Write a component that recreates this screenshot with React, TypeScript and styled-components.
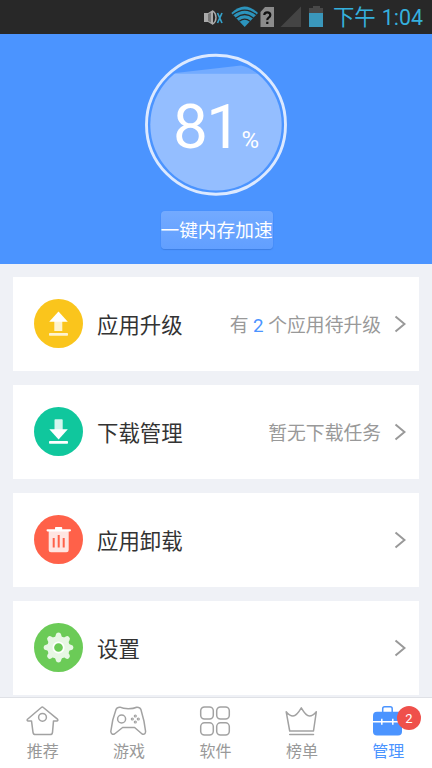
import React from "react";
import styled, { createGlobalStyle } from "styled-components";

const Global = createGlobalStyle`
  * { box-sizing: border-box; }
  html, body { margin: 0; padding: 0; overflow: hidden; }
  body { font-family: Roboto, "Noto Sans CJK SC", sans-serif; }
`;

const Screen = styled.div`
  width: 432px;
  height: 768px;
  display: flex;
  flex-direction: column;
  overflow: hidden;
  background: #eff1f6;
`;

const StatusBar = styled.header`
  flex: none;
  height: 34px;
  display: flex;
  justify-content: flex-end;
  align-items: center;
  padding-right: 9px;
  background: #282828;
  color: #35b0dd;
`;

const Clock = styled.div`
  display: flex;
  gap: 6px;
  margin-left: 8px;
  padding-top: 2px;
  font-size: 21.4px;
  line-height: 32px;
  white-space: nowrap;
`;

const Hero = styled.section`
  flex: none;
  height: 230px;
  display: flex;
  flex-direction: column;
  align-items: center;
  padding-top: 19px;
  background: #4b94ff;
`;

const Gauge = styled.div`
  display: grid;
  width: 144px;
  height: 144px;
  > * { grid-area: 1 / 1; }
`;

const Reading = styled.div`
  z-index: 1;
  display: flex;
  align-items: baseline;
  padding: 36px 0 0 29px;
  color: #fff;
  line-height: 75px;
`;

const Value = styled.span`
  font-size: 62px;
  letter-spacing: -1.6px;
`;

const Percent = styled.span`
  margin-left: 2px;
  font-size: 24px;
`;

const BoostButton = styled.button`
  width: 112px;
  height: 38px;
  margin: 14px 0 0 1px;
  padding: 2px 0 0;
  border: 0;
  border-radius: 4px;
  background: linear-gradient(#73aaff, #619fff);
  box-shadow: 0 1px 1px #3d7fe4, 0 0 1px #3d7fe4;
  color: #fff;
  font: 18.7px/36px Roboto, "Noto Sans CJK SC", sans-serif;
  white-space: nowrap;
`;

const List = styled.main`
  flex: 1;
  min-height: 0;
  overflow: hidden;
  display: flex;
  flex-direction: column;
  gap: 14px;
  padding: 13px 13px 0;
`;

const Card = styled.div`
  flex: none;
  height: 94px;
  display: flex;
  align-items: center;
  padding: 0 13px 1px 21px;
  background: #fff;
`;

const Disc = styled.svg`
  display: block;
  width: 49px;
  height: 49px;
`;

const Label = styled.div`
  flex: 1;
  margin-left: 14px;
  padding-top: 4px;
  font-size: 21.4px;
  line-height: 32px;
  color: #333;
`;

const Note = styled.div`
  margin-right: 13px;
  padding-top: 5px;
  font-size: 18.8px;
  line-height: 28px;
  color: #999;
  white-space: pre;
  b { font-weight: 400; color: #4b94ff; }
`;

const TabBar = styled.nav`
  flex: none;
  height: 71px;
  display: grid;
  grid-template-columns: repeat(5, 1fr);
  border-top: 1px solid #dfe1e6;
  background: #fff;
`;

const Tab = styled.div<{ $active?: boolean }>`
  position: relative;
  display: flex;
  flex-direction: column;
  align-items: center;
  padding: 7px 1px 0 0;
  color: ${(p) => (p.$active ? "#4b94ff" : "#999")};
`;

const TabIcon = styled.svg`
  display: block;
  width: 40px;
  height: 32px;
  fill: none;
  stroke: #a2a2a2;
  stroke-width: 1.5;
  stroke-linejoin: round;
  stroke-linecap: round;
`;

const TabText = styled.span`
  margin-top: 3px;
  font-size: 16px;
  line-height: 24px;
`;

const Badge = styled.span`
  position: absolute;
  top: 8px;
  right: 11px;
  width: 24px;
  height: 24px;
  border-radius: 50%;
  background: #ef504b;
  color: #fff;
  font-size: 13px;
  line-height: 25px;
  text-align: center;
`;

const StatusIcons = () => (
  <svg width="124" height="34" viewBox="201 0 124 34">
    <path d="M204 13h4l5-3v15l-5-3h-4z" fill="#aaa" />
    <path d="M208 14l3-1.500v10l-3-1.500z" fill="#777" />
    <path d="M213 11q3 2.500 3 6.500t-3 6.500" fill="none" stroke="#aaa" strokeWidth="1.400" />
    <path d="M217.500 13l4.500 10M222 13l-4.500 10" stroke="#35a0c8" strokeWidth="1.700" />
    <path d="M231.300 13Q244.500 0 258 13L244.700 27Z" fill="#2c94bd" />
    <g fill="none" stroke="#282828" strokeWidth="1.300">
      <path d="M233 14.800q11.700-9.500 23.400 0" />
      <path d="M236 18q8.700-7 17.400 0" />
      <path d="M239.300 21.300q5.400-4.500 10.800 0" />
    </g>
    <path d="M265 7h9v20h-13.500V12z" fill="#8b8b8b" />
    <path d="M264.300 15q0-2.700 3-2.700t3 2.700q0 1.500-1.600 2.700t-1.400 2.500M267.300 21.800v2.300" fill="none" stroke="#111" strokeWidth="2.200" />
    <path d="M301 6.500V27h-20.500z" fill="#444" />
    <path d="M313 6h7v2h3v5h-14V8h4z" fill="#484848" />
    <path d="M309 13h14v14h-14z" fill="#3a97bb" />
  </svg>
);

const GaugeArt = () => (
  <svg width="144" height="144" viewBox="0 0 144 144">
    <defs>
      <clipPath id="tank"><circle cx="72" cy="71.700" r="65.700" /></clipPath>
    </defs>
    <g clipPath="url(#tank)">
      <path d="M27 20.500L97 12.500Q105 14 114 20.500z" fill="#73abff" />
      <path d="M0 20.500h144V144H0z" fill="#94beff" />
    </g>
    <circle cx="72" cy="71.700" r="69.500" fill="none" stroke="#dce9ff" strokeWidth="2.900" />
  </svg>
);

const UpgradeIcon = () => (
  <Disc viewBox="0 0 49 49">
    <circle cx="24.500" cy="24.500" r="24.500" fill="#fac51c" />
    <path d="M20.300 22h8v10h-8z" fill="#fef3cf" />
    <path d="M24.500 12.500l9.300 10.300H15.200z" fill="#fff" />
    <rect x="15" y="34" width="19" height="2.700" rx=".8" fill="#fef3cf" />
  </Disc>
);

const DownloadIcon = () => (
  <Disc viewBox="0 0 49 49">
    <circle cx="24.500" cy="24.500" r="24.500" fill="#10c79d" />
    <path d="M20.500 13q0-.8.8-.8h6.600q.8 0 .8.800v10h-8.200z" fill="#d6f6ee" />
    <path d="M15.300 22.200h18.500l-9.200 10.200z" fill="#fff" />
    <rect x="15" y="34" width="19" height="2.700" rx=".8" fill="#fff" />
  </Disc>
);

const TrashIcon = () => (
  <Disc viewBox="0 0 49 49">
    <circle cx="24.500" cy="24.500" r="24.500" fill="#ff6149" />
    <path d="M14.700 16h20v19q0 2.300-2.300 2.300H17q-2.300 0-2.300-2.300z" fill="#ffe5e1" />
    <path d="M13 14.300h8v-1.500q0-.8.800-.8h5.600q.8 0 .8.800v1.500H36q1 0 1 1t-1 1.200H13.500q-1-.2-1-1.200t1-1z" fill="#fff" />
    <path d="M19.700 23v9.500M24.700 20v12.500M29.700 23v9.500" stroke="#ff6149" strokeWidth="2" />
  </Disc>
);

const teeth = [0, 45, 90, 135, 180, 225, 270, 315];

const SettingsIcon = () => (
  <Disc viewBox="0 0 49 49">
    <circle cx="24.500" cy="24.500" r="24.500" fill="#6bcb57" />
    <g fill="#e7f7e4">
      <circle cx="24.500" cy="24.500" r="11.300" />
      {teeth.map((a) => (
        <path
          key={a}
          transform={`rotate(${a} 24.500 24.500)`}
          d="M19.700 15q2.100-1 2.200-3.500Q22.300 9.600 24.500 9.600t2.600 1.900Q27.200 14 29.300 15z"
        />
      ))}
    </g>
    <circle cx="24.500" cy="24.500" r="5.200" fill="#6bcb57" stroke="#fff" strokeWidth="1.700" />
  </Disc>
);

const Chevron = () => (
  <svg width="12" height="18" viewBox="0 0 12 18">
    <path d="M1.500 1.500L10.500 9l-9 7.500" fill="none" stroke="#999" strokeWidth="2" />
  </svg>
);

const rows = [
  { Icon: UpgradeIcon, label: "应用升级", note: <>有 <b>2</b> 个应用待升级</> },
  { Icon: DownloadIcon, label: "下载管理", note: <>暂无下载任务</> },
  { Icon: TrashIcon, label: "应用卸载", note: null },
  { Icon: SettingsIcon, label: "设置", note: null },
];

const tabs = [
  {
    label: "推荐",
    art: (
      <>
        <path d="M18.300 2.500q1-1 2 0L34.500 14.200q1 1.400-.5 1.700h-3.500l-1 11.500q-.2 2.200-2.500 2.200H12.500q-2.200 0-2.500-2.200L8.500 15.900H5q-1.500-.3-.5-1.700z" />
        <circle cx="19.500" cy="12.300" r="3.900" />
      </>
    ),
  },
  {
    label: "游戏",
    art: (
      <>
        <path d="M7 4.500Q8 2 11 2.200q3 1.500 8.300 1.500T27.700 2.200q3.300-.2 4.200 2.300Q35.500 16 36.600 26.500q-.2 3.500-3.500 2.500l-7.500-6.500h-12L5.500 29q-3.300.8-3.700-2.500Q3 15 7 4.500z" />
        <circle cx="12.600" cy="14" r="4" />
        <g strokeWidth="1.200">
          <circle cx="26.300" cy="11" r="1" />
          <circle cx="26.300" cy="17" r="1" />
          <circle cx="23.300" cy="14" r="1" />
          <circle cx="29.300" cy="14" r="1" />
        </g>
      </>
    ),
  },
  {
    label: "软件",
    art: (
      <>
        <rect x="5.700" y="1.900" width="12.600" height="12.200" rx="3.800" />
        <rect x="21.700" y="1.900" width="12.600" height="12.200" rx="3.800" />
        <rect x="5.700" y="17.800" width="12.600" height="12.200" rx="3.800" />
        <rect x="21.700" y="17.800" width="12.600" height="12.200" rx="3.800" />
      </>
    ),
  },
  {
    label: "榜单",
    art: (
      <path d="M4.200 6.800L7.700 26h23.800L34.300 6.800Q31 11 27.500 11T19.300 2.800Q14.500 11 11 11T4.200 6.800zM7.700 29.400h23.800" />
    ),
  },
  {
    label: "管理",
    active: true,
    art: (
      <>
        <path d="M14.700 8V3.800q0-2 2-2h5.500q2 0 2 2V8" stroke="#4b94ff" />
        <rect x="5" y="6.700" width="29" height="23.800" rx="4" fill="#4b94ff" stroke="none" />
        <path d="M5 16.700h29M13.800 13.800v6M24.800 13.800v6" stroke="#fff" strokeLinecap="butt" />
      </>
    ),
    badge: "2",
  },
];

export default function App() {
  return (
    <Screen>
      <Global />
      <StatusBar>
        <StatusIcons />
        <Clock><span>下午</span><span>1:04</span></Clock>
      </StatusBar>
      <Hero>
        <Gauge>
          <GaugeArt />
          <Reading><Value>81</Value><Percent>%</Percent></Reading>
        </Gauge>
        <BoostButton>一键内存加速</BoostButton>
      </Hero>
      <List>
        {rows.map(({ Icon, label, note }) => (
          <Card key={label}>
            <Icon />
            <Label>{label}</Label>
            {note && <Note>{note}</Note>}
            <Chevron />
          </Card>
        ))}
      </List>
      <TabBar>
        {tabs.map((t) => (
          <Tab key={t.label} $active={t.active}>
            <TabIcon viewBox="0 0 40 32">{t.art}</TabIcon>
            <TabText>{t.label}</TabText>
            {t.badge && <Badge>{t.badge}</Badge>}
          </Tab>
        ))}
      </TabBar>
    </Screen>
  );
}
